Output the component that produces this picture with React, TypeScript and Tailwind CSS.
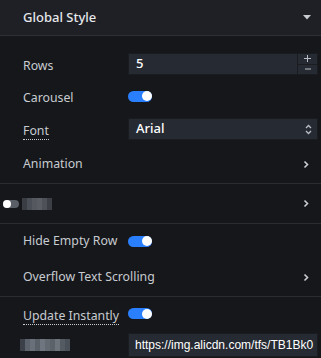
import React from 'react';

const font = { fontFamily: '"Noto Sans", "Open Sans", sans-serif' };

function Toggle({ on = true }: { on?: boolean }) {
  return (
    <div className={`w-[24px] h-[11px] rounded-full flex items-center ${on ? 'bg-[#2a7fff] justify-end' : 'bg-[#5a5e66] justify-start'}`}>
      <div className="w-[10px] h-[10px] rounded-full bg-white" />
    </div>);
}

function Chevron() {
  return (
    <svg width="6" height="9" viewBox="0 0 6 9" className="text-[#c9ccd1]">
      <path d="M1.5 1.5 L4.5 4.5 L1.5 7.5" fill="none" stroke="currentColor" strokeWidth="1.6" />
    </svg>);
}

function Mosaic({ cells }: { cells: string[] }) {
  return (
    <div className="flex">
      {cells.map((c, i) =>
      <div key={i} className="w-[5px] h-[12px]" style={{ background: c }} />
      )}
    </div>);
}

function Row({ label, children, dotted = false, className = '' }: { label: React.ReactNode; children?: React.ReactNode; dotted?: boolean; className?: string }) {
  return (
    <div className={`flex items-center pl-[23px] pr-[3px] ${className}`}>
      <div className="w-[105px] shrink-0">
        <span className={`text-[12.3px] text-[#c8cbd0] ${dotted ? 'border-b border-dotted border-[#c8cbd0]' : ''}`}>{label}</span>
      </div>
      <div className="flex-1 flex items-center">{children}</div>
    </div>);
}

export default function App() {
  return (
    <div className="w-[321px] h-[358px] bg-[#15171b] overflow-hidden" style={font}>
      {/* header */}
      <div className="h-[36px] bg-[#1e2026] border-b border-[#2c2f36] flex items-center justify-between pl-[23px] pr-[10px]">
        <span className="text-[13px] font-medium text-[#e6e8eb]">Global Style</span>
        <svg width="8" height="5" viewBox="0 0 8 5">
          <path d="M0 0 H8 L4 4.5 Z" fill="#c9ccd1" />
        </svg>
      </div>

      <div className="h-[17px]" />
      {/* rows */}
      <Row label="Rows" className="h-[22px]">
        <div className="flex-1 h-[22px] flex border border-[#1a1c20]">
          <div className="flex-1 bg-[#262a33] flex items-center pl-[7px] text-[13px] font-medium text-white">5</div>
          <div className="w-[20px] flex flex-col bg-[#262a33] border-l border-[#1a1c20]">
            <div className="flex-1 flex items-center justify-center border-b border-[#1a1c20]">
              <svg width="7" height="7" viewBox="0 0 7 7">
                <path d="M0 3.5 H7 M3.5 0 V7" stroke="#b9bdc4" strokeWidth="1" />
              </svg>
            </div>
            <div className="flex-1 flex items-center justify-center">
              <svg width="6" height="2" viewBox="0 0 6 2">
                <path d="M0 1 H6" stroke="#b9bdc4" strokeWidth="1" />
              </svg>
            </div>
          </div>
        </div>
      </Row>

      <div className="h-[10px]" />
      <Row label="Carousel" className="h-[22px]">
        <Toggle />
      </Row>

      <div className="h-[11px]" />
      <Row label="Font" dotted className="h-[22px]">
        <div className="flex-1 h-[22px] bg-[#262a33] border border-[#1a1c20] flex items-center justify-between pl-[7px] pr-[5px]">
          <span className="text-[13px] font-medium text-white">Arial</span>
          <svg width="7" height="11" viewBox="0 0 7 11">
            <path d="M1 4 L3.5 1.5 L6 4 M1 7 L3.5 9.5 L6 7" fill="none" stroke="#b9bdc4" strokeWidth="1.3" />
          </svg>
        </div>
      </Row>

      <div className="h-[38px] flex items-center justify-between pl-[23px] pr-[12px] mt-[5px]">
        <span className="text-[12.3px] text-[#c8cbd0]">Animation</span>
        <Chevron />
      </div>

      <div className="border-t border-[#2a2c31]" />

      <div className="h-[39px] flex items-center justify-between pl-[3px] pr-[12px]">
        <div className="flex items-center gap-[3px]">
          <div className="w-[16px] h-[8px] rounded-full bg-[#5a5e66] flex items-center">
            <div className="w-[8px] h-[8px] rounded-full bg-white" />
          </div>
          <Mosaic cells={['#3a3d44', '#4a4e56', '#55595f', '#5a5d64', '#4e5158', '#3c3f46']} />
        </div>
        <Chevron />
      </div>

      <div className="border-t border-[#2a2c31]" />

      <div className="h-[34px] flex items-center pl-[23px] pr-[3px]">
        <span className="text-[12.3px] text-[#c8cbd0] w-[105px] whitespace-nowrap">Hide Empty Row</span>
        <Toggle />
      </div>

      <div className="h-[38px] flex items-center justify-between pl-[23px] pr-[12px]">
        <span className="text-[12.3px] text-[#c8cbd0]">Overflow Text Scrolling</span>
        <Chevron />
      </div>

      <div className="border-t border-[#2a2c31]" />

      <div className="h-[33px] flex items-center pl-[23px] pr-[3px]">
        <div className="w-[105px] shrink-0 whitespace-nowrap">
          <span className="text-[12.3px] text-[#c8cbd0] border-b border-dotted border-[#c8cbd0]">Update Instantly</span>
        </div>
        <Toggle />
      </div>

      <div className="h-[30px] flex items-center pl-[20px] pr-[3px]">
        <div className="w-[108px] shrink-0">
          <Mosaic cells={['#3b4049', '#5d636c', '#6a7079', '#5a6068', '#707680', '#646a72', '#5c626a', '#6e747c', '#555b63', '#4a5058']} />
        </div>
        <div className="flex-1 h-[24px] bg-[#262a33] border border-[#1a1c20] flex items-center pl-[6px] overflow-hidden">
          <span className="text-[12px] text-white whitespace-nowrap" style={{ fontFamily: '"Liberation Sans", Arial, sans-serif' }}>https://img.alicdn.com/tfs/TB1Bk0</span>
        </div>
      </div>
    </div>);
}
